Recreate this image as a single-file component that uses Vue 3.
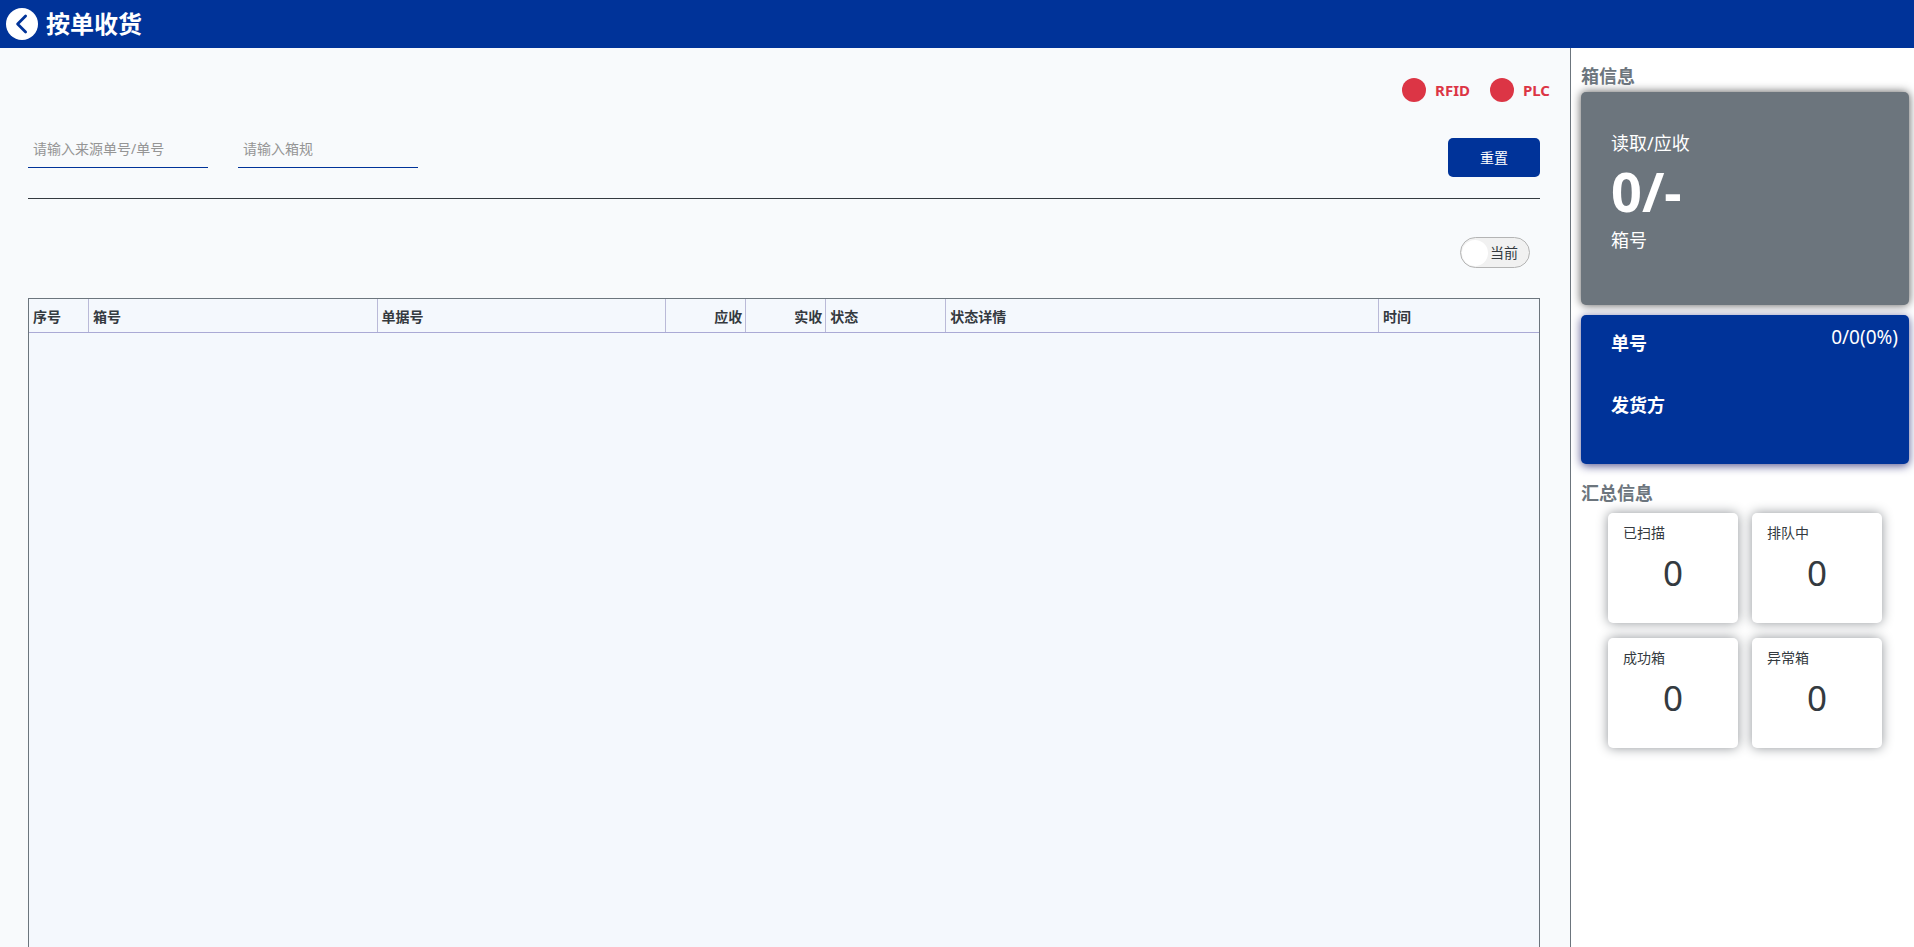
<script setup>
import { ref } from 'vue'

const sourceNo = ref('')
const boxSpec = ref('')
const showAll = ref(false)

const devices = ['RFID', 'PLC']
const columns = [
  { label: '序号' },
  { label: '箱号' },
  { label: '单据号' },
  { label: '应收', right: true },
  { label: '实收', right: true },
  { label: '状态' },
  { label: '状态详情' },
  { label: '时间' },
]
const summary = ref([
  { label: '已扫描', value: 0 },
  { label: '排队中', value: 0 },
  { label: '成功箱', value: 0 },
  { label: '异常箱', value: 0 },
])

function reset() {
  sourceNo.value = ''
  boxSpec.value = ''
}
</script>

<template>
  <div class="page">
    <header class="topbar">
      <button class="back" type="button" aria-label="返回">
        <svg width="32" height="32" viewBox="0 0 32 32">
          <circle cx="16" cy="16" r="16" fill="#fff" />
          <path d="M19.6 8 11.6 16l8 8" fill="none" stroke="#003399" stroke-width="2.8" stroke-linecap="round" stroke-linejoin="round" />
        </svg>
      </button>
      <h1>按单收货</h1>
    </header>

    <div class="body">
      <main class="content">
        <div class="devices">
          <span v-for="d in devices" :key="d" class="device"><i class="dot"></i>{{ d }}</span>
        </div>

        <form class="filters" @submit.prevent>
          <input v-model="sourceNo" type="text" placeholder="请输入来源单号/单号" aria-label="来源单号/单号" />
          <input v-model="boxSpec" type="text" placeholder="请输入箱规" aria-label="箱规" />
          <button class="reset" type="button" @click="reset">重置</button>
        </form>

        <div class="switch-row">
          <label class="switch">
            <input v-model="showAll" type="checkbox" />
            <span class="knob"></span>
            <span>当前</span>
          </label>
        </div>

        <table class="grid">
          <thead>
            <tr>
              <th v-for="c in columns" :key="c.label" :class="{ right: c.right }">{{ c.label }}</th>
            </tr>
          </thead>
          <tbody></tbody>
        </table>
      </main>

      <aside class="side">
        <h2>箱信息</h2>
        <section class="card box-card">
          <p>读取/应收</p>
          <strong>0/-</strong>
          <p>箱号</p>
        </section>

        <section class="card order-card">
          <div class="order-text">
            <h3>单号</h3>
            <h3>发货方</h3>
          </div>
          <span class="progress">0/0(0%)</span>
        </section>

        <h2>汇总信息</h2>
        <div class="summary">
          <section v-for="s in summary" :key="s.label" class="tile">
            <p>{{ s.label }}</p>
            <span class="value">{{ s.value }}</span>
          </section>
        </div>
      </aside>
    </div>
  </div>
</template>

<style>
body {
  margin: 0;
}
</style>

<style scoped>
* {
  box-sizing: border-box;
}
.page {
  display: flex;
  flex-direction: column;
  height: 100vh;
  overflow: hidden;
  font-family: "Noto Sans", "Noto Sans CJK SC", sans-serif;
  font-size: 14px;
  line-height: 20px;
  color: #343a40;
  background: #fff;
}
h1,
h2,
h3,
p {
  margin: 0;
}
button,
input {
  font: inherit;
}
.topbar {
  display: flex;
  align-items: center;
  gap: 8px;
  flex: none;
  height: 48px;
  padding: 0 6px;
  background: #003399;
  color: #fff;
}
.back {
  display: flex;
  padding: 0;
  border: 0;
  background: none;
  cursor: pointer;
}
h1 {
  font-size: 24px;
  line-height: 32px;
  font-weight: 700;
}
.body {
  display: flex;
  flex: 1;
  min-height: 0;
}
.content {
  display: flex;
  flex-direction: column;
  flex: 1;
  min-width: 0;
  padding: 30px 30px 0 28px;
  background: #f8fafc;
}
.devices {
  display: flex;
  justify-content: flex-end;
  gap: 20px;
  margin-right: -10px;
}
.device {
  display: flex;
  align-items: center;
  gap: 9px;
  font-size: 15px;
  font-weight: 700;
  line-height: 24px;
  color: #dc3545;
}
.dot {
  width: 24px;
  height: 24px;
  border-radius: 50%;
  background: #dc3545;
}
.filters {
  display: flex;
  align-items: flex-start;
  gap: 30px;
  margin-top: 28px;
  padding: 8px 0 21px;
  border-bottom: 1px solid #343a40;
}
.filters input {
  width: 180px;
  height: 38px;
  margin-bottom: -8px;
  margin-top: -8px;
  padding: 0 5px;
  border: 0;
  border-bottom: 1px solid #003399;
  border-radius: 0;
  background: none;
  color: #343a40;
  outline: none;
}
.filters input::placeholder {
  color: #959595;
  opacity: 1;
}
.reset {
  width: 92px;
  height: 39px;
  margin-left: auto;
  border: 0;
  border-radius: 5px;
  background: #003399;
  color: #fff;
  cursor: pointer;
}
.switch-row {
  display: flex;
  justify-content: flex-end;
  padding: 38px 10px 30px;
}
.switch {
  display: flex;
  align-items: center;
  gap: 2px;
  width: 70px;
  height: 31px;
  padding: 0 1px;
  border: 1px solid #b4b4b4;
  border-radius: 16px;
  background: #f1f1f1;
  cursor: pointer;
}
.switch input {
  position: absolute;
  opacity: 0;
}
.knob {
  width: 26px;
  height: 26px;
  border-radius: 50%;
  background: #fff;
}
.grid {
  display: flex;
  flex-direction: column;
  flex: 1;
  border: 1px solid #6c757d;
  border-bottom: 0;
  background: #f4f8fd;
}
.grid tr {
  display: grid;
  grid-template-columns: 60px 2fr 2fr 80px 80px 120px 3fr 160px;
  height: 34px;
  border-bottom: 1px solid #aaaad5;
}
.grid th {
  padding: 8px 3px 4px 4px;
  border-right: 1px solid #babad8;
  font-weight: 700;
  text-align: left;
}
.grid th:last-child {
  border-right: 0;
}
.grid th.right {
  text-align: right;
}
.side {
  flex: none;
  width: 344px;
  padding: 14px 5px 0 10px;
  border-left: 1px solid #6c757d;
  background: #fff;
}
h2,
h3 {
  font-size: 18px;
  line-height: 28px;
  font-weight: 700;
}
h2 {
  color: #6c757d;
}
.card {
  border-radius: 5px;
  color: #fff;
  font-size: 18px;
}
.box-card {
  height: 213px;
  margin: 2px 0 10px;
  padding: 37px 30px;
  line-height: 28px;
  background: #6c757d;
  box-shadow: 0 0 10px #555;
}
.box-card strong {
  display: block;
  font-size: 54px;
  line-height: 69px;
}
.order-card {
  display: flex;
  justify-content: space-between;
  height: 149px;
  margin-bottom: 15px;
  padding: 8px 11px 0 30px;
  background: #003399;
  box-shadow: 0 2px 10px #555590;
}
.order-text {
  display: flex;
  flex-direction: column;
  gap: 34px;
  padding-top: 6px;
}
.progress {
  font-size: 19px;
  line-height: 28px;
}
.summary {
  display: grid;
  grid-template-columns: 130px 130px;
  justify-content: center;
  gap: 15px 14px;
  margin-top: 6px;
}
.tile {
  height: 110px;
  padding: 10px 15px;
  border-radius: 5px;
  background: #fff;
  box-shadow: 0 0 12px #909498;
}
.value {
  display: block;
  margin-top: 6px;
  font-size: 35px;
  line-height: 48px;
  text-align: center;
}
</style>
